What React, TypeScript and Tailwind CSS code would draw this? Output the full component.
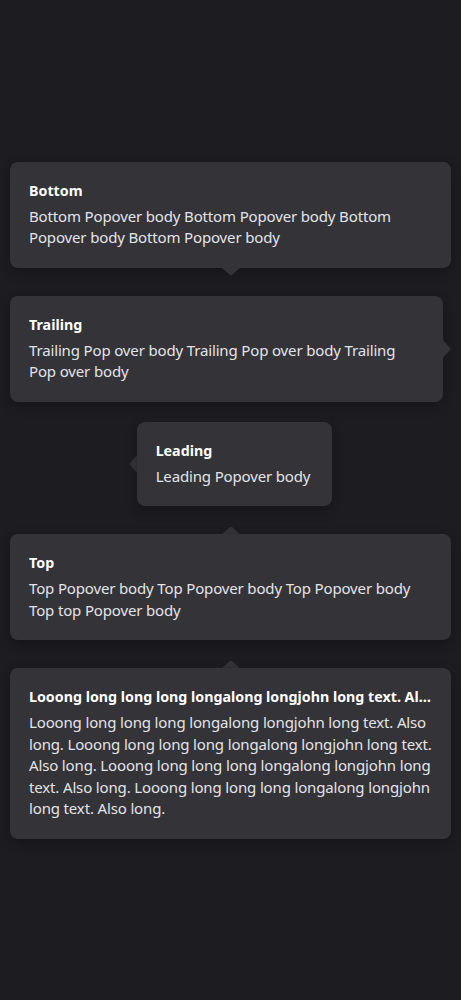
import React from "react";

type Placement = "bottom" | "top" | "leading" | "trailing";

type PopoverProps = {
  title: string;
  body: string;
  placement: Placement;
  fit?: boolean;
};

const CARD = "#333338";

// arrow pointing down / up / left / right, drawn in the card colour
const Arrow = ({ placement }: { placement: Placement }) => {
  if (placement === "bottom")
    return (
      <svg width="20" height="9" viewBox="0 0 20 9" className="self-center -mt-px block">
        <path d="M0 0 L8.4 7.6 Q10 9 11.6 7.6 L20 0 Z" fill={CARD} />
      </svg>
    );
  if (placement === "top")
    return (
      <svg width="20" height="9" viewBox="0 0 20 9" className="self-center -mb-px block">
        <path d="M0 9 L8.4 1.4 Q10 0 11.6 1.4 L20 9 Z" fill={CARD} />
      </svg>
    );
  if (placement === "trailing")
    return (
      <svg width="9" height="20" viewBox="0 0 9 20" className="self-center -ml-px block shrink-0">
        <path d="M0 0 L7.6 8.4 Q9 10 7.6 11.6 L0 20 Z" fill={CARD} />
      </svg>
    );
  return (
    <svg width="9" height="20" viewBox="0 0 9 20" className="self-center -mr-px block shrink-0">
      <path d="M9 0 L1.4 8.4 Q0 10 1.4 11.6 L9 20 Z" fill={CARD} />
    </svg>
  );
};

const Popover: React.FC<PopoverProps> = ({ title, body, placement, fit }) => {
  const card = (
    <div
      className={`bg-[#333338] rounded-lg pl-[19px] py-[19px] shadow-[0_4px_12px_rgba(0,0,0,0.25)] min-w-0 ${
        fit ? "pr-[22px]" : "pr-[19px] flex-1 w-full"
      }`}
    >
      <div className="text-[14.25px] leading-5 font-bold text-white truncate">
        {title}
      </div>
      <p className="mt-[5px] text-[15px] leading-[21.5px] tracking-[-0.15px] text-[#e4e4e8]">
        {body}
      </p>
    </div>
  );

  if (placement === "bottom")
    return (
      <div className="w-full flex flex-col">
        {card}
        <Arrow placement="bottom" />
      </div>
    );
  if (placement === "top")
    return (
      <div className="w-full flex flex-col">
        <Arrow placement="top" />
        {card}
      </div>
    );
  if (placement === "trailing")
    return (
      <div className="w-full flex flex-row">
        {card}
        <Arrow placement="trailing" />
      </div>
    );
  return (
    <div className="flex flex-row">
      <Arrow placement="leading" />
      {card}
    </div>
  );
};

const longText =
  "Looong long long long longalong longjohn long text. Also long. Looong long long long longalong longjohn long text. Also long. Looong long long long longalong longjohn long text. Also long. Looong long long long longalong longjohn long text. Also long.";

export default function App() {
  return (
    <div className="min-h-screen w-full bg-[#1c1c21] flex flex-col items-center justify-center gap-5 px-[10px] font-['Noto_Sans',sans-serif]">
      <Popover
        placement="bottom"
        title="Bottom"
        body="Bottom Popover body Bottom Popover body Bottom Popover body Bottom Popover body"
      />
      <Popover
        placement="trailing"
        title="Trailing"
        body="Trailing Pop over body Trailing Pop over body Trailing Pop over body"
      />
      <Popover placement="leading" fit title="Leading" body="Leading Popover body" />
      <Popover
        placement="top"
        title="Top"
        body="Top Popover body Top Popover body Top Popover body Top top Popover body"
      />
      <Popover placement="top" title={longText} body={longText} />
    </div>
  );
}
